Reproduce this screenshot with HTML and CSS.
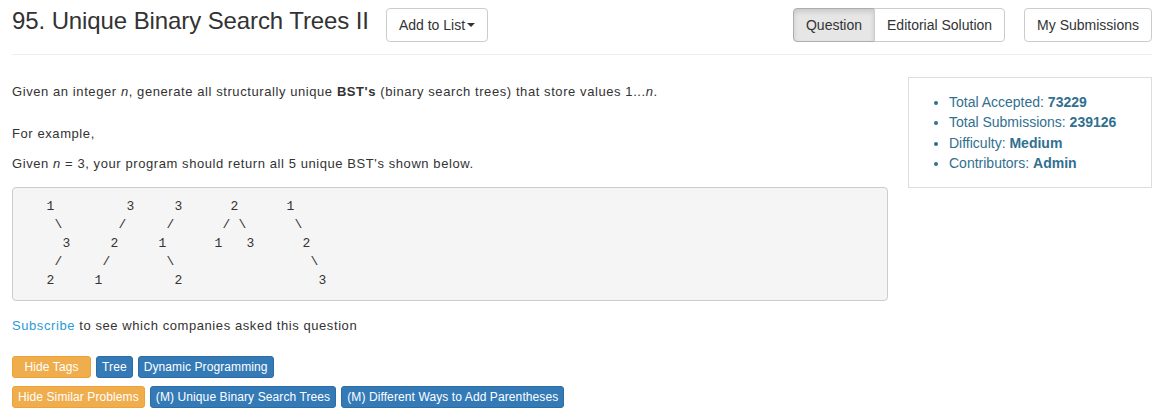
FILE: index.html
```html
<!DOCTYPE html>
<html>
<head>
<meta charset="utf-8">
<link rel="stylesheet" href="styles.css">
</head>
<body>
<div class="page">
  <div class="header">
    <h3 class="title">95. Unique Binary Search Trees II</h3>
    <button class="btn add-btn">Add to List<span class="caret"></span></button>
    <div class="spacer"></div>
    <div class="btn-group">
      <button class="btn active first">Question</button><button class="btn last">Editorial Solution</button>
    </div>
    <button class="btn subs">My Submissions</button>
  </div>
  <hr class="rule">
  <div class="row">
    <div class="main">
      <p class="p1">Given an integer <em>n</em>, generate all structurally unique <b>BST's</b> (binary search trees) that store values 1...<em>n</em>.</p>
      <p class="p2">For example,</p>
      <p class="p3">Given <em>n</em> = 3, your program should return all 5 unique BST's shown below.</p>
<pre class="code">   1         3     3      2      1
    \       /     /      / \      \
     3     2     1      1   3      2
    /     /       \                 \
   2     1         2                 3</pre>
      <p class="subscribe"><a class="link">Subscribe</a> to see which companies asked this question</p>
      <div class="tags first-row">
        <span class="tag warn wide">Hide Tags</span>
        <span class="tag blue">Tree</span>
        <span class="tag blue">Dynamic Programming</span>
      </div>
      <div class="tags">
        <span class="tag warn">Hide Similar Problems</span>
        <span class="tag blue">(M) Unique Binary Search Trees</span>
        <span class="tag blue">(M) Different Ways to Add Parentheses</span>
      </div>
    </div>
    <div class="side">
      <div class="panel">
        <ul class="stats">
          <li>Total Accepted: <b>73229</b></li>
          <li>Total Submissions: <b>239126</b></li>
          <li>Difficulty: <b>Medium</b></li>
          <li>Contributors: <b>Admin</b></li>
        </ul>
      </div>
    </div>
  </div>
</div>
</body>
</html>
```
FILE: styles.css
```css
* { box-sizing: border-box; }
body {
  margin: 0;
  font-family: "Liberation Sans", Arial, sans-serif;
  font-size: 13px;
  line-height: 1.42857;
  color: #333;
  background: #fff;
}
.page {
  width: 1140px;
  margin-left: 12px;
  padding-top: 8px;
}
.header {
  display: flex;
  align-items: flex-start;
}
.title {
  margin: 0;
  font-size: 24px;
  font-weight: 400;
  line-height: 26px;
  color: #333;
  letter-spacing: -0.1px;
}
.btn {
  font-family: "Liberation Sans", Arial, sans-serif;
  font-size: 14px;
  line-height: 20px;
  height: 34px;
  padding: 6px 12px;
  color: #333;
  background: #fff;
  border: 1px solid #ccc;
  border-radius: 4px;
  cursor: pointer;
}
.add-btn {
  margin-left: 17px;
  display: flex;
  align-items: center;
}
.caret {
  display: inline-block;
  width: 0;
  height: 0;
  margin-left: 2px;
  border-top: 4px solid #333;
  border-left: 4px solid transparent;
  border-right: 4px solid transparent;
}
.spacer { flex: 1; }
.btn-group { display: flex; }
.btn-group .first { border-radius: 4px 0 0 4px; }
.btn-group .last { border-radius: 0 4px 4px 0; margin-left: -1px; }
.btn.active {
  background: #e6e6e6;
  border-color: #adadad;
  box-shadow: inset 0 3px 5px rgba(0,0,0,.125);
}
.subs { margin-left: 19px; }
.rule {
  margin: 12px 0 0;
  border: 0;
  border-top: 1px solid #eee;
  height: 0;
}
.row {
  display: grid;
  grid-template-columns: 876px 244px;
  column-gap: 20px;
  margin-top: 22px;
}
.main p {
  margin: 0;
  letter-spacing: 0.58px;
}
.main .p1 { margin-top: 6px; }
.main .p2 { margin-top: 23px; }
.main .p3 { margin-top: 11.5px; }
.code {
  margin: 14px 0 0;
  padding: 9.5px;
  font-family: "Liberation Mono", "Courier New", monospace;
  font-size: 13px;
  letter-spacing: 0.2px;
  line-height: 1.42857;
  color: #333;
  background: #f5f5f5;
  border: 1px solid #ccc;
  border-radius: 4px;
}
.main .subscribe { margin-top: 16px; }
.link { color: #2a9bd6; text-decoration: none; }
.tags {
  display: flex;
  gap: 5px;
  margin-top: 8px;
}
.tags.first-row { margin-top: 20px; }
.tag {
  display: inline-block;
  font-size: 12px;
  line-height: 18px;
  padding: 1px 5px;
  border: 1px solid;
  border-radius: 3px;
  color: #fff;
  letter-spacing: 0.1px;
}
.tag.wide { padding: 1px 11.5px; }
.warn { background: #f0ad4e; border-color: #eea236; }
.blue { background: #337ab7; border-color: #2e6da4; }
.panel {
  border: 1px solid #ddd;
  padding: 14px 15px;
}
.stats {
  margin: 0;
  padding-left: 25px;
  font-size: 14px;
  line-height: 20.3px;
  color: #31708f;
}
.stats b { font-weight: 700; }
```
